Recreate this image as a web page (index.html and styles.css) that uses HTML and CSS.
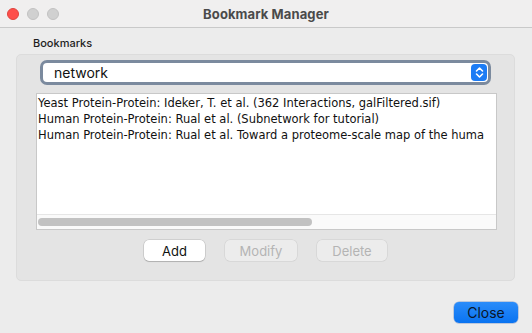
FILE: index.html
```html
<!DOCTYPE html>
<html lang="en">
<head>
    <meta charset="UTF-8">
    <title>Bookmark Manager</title>
    <link rel="stylesheet" href="styles.css">
</head>
<body>
    <div class="window">
        <div class="titlebar">
            <div class="lights">
                <span class="light red"></span>
                <span class="light gray"></span>
                <span class="light gray"></span>
            </div>
            <div class="title">Bookmark Manager</div>
        </div>

        <div class="content">
            <div class="group-label">Bookmarks</div>
            <div class="panel">
                <div class="select">
                    <span class="select-text">network</span>
                    <span class="stepper">
                        <svg width="11" height="13" viewBox="0 0 11 13">
                            <path d="M2.5 5 L5.5 2 L8.5 5 M2.5 8 L5.5 11 L8.5 8" fill="none" stroke="#fff" stroke-width="1.6" stroke-linecap="round" stroke-linejoin="round"/>
                        </svg>
                    </span>
                </div>

                <div class="list">
                    <div class="rows">
                        <div class="row">Yeast Protein-Protein: Ideker, T. et al. (362 Interactions, galFiltered.sif)</div>
                        <div class="row">Human Protein-Protein: Rual et al. (Subnetwork for tutorial)</div>
                        <div class="row">Human Protein-Protein: Rual et al. Toward a proteome-scale map of the huma</div>
                    </div>
                    <div class="hscroll"><div class="thumb"></div></div>
                </div>

                <div class="actions">
                    <button class="btn">Add</button>
                    <button class="btn disabled">Modify</button>
                    <button class="btn disabled">Delete</button>
                </div>
            </div>

            <div class="footer">
                <button class="btn primary">Close</button>
            </div>
        </div>
    </div>
</body>
</html>
```

FILE: styles.css
```css
html, body {
    margin: 0;
    padding: 0;
}
body {
    width: 532px;
    height: 333px;
    overflow: hidden;
    background: #ececec;
    font-family: "Inter", "Open Sans", sans-serif;
    font-size: 13px;
    color: #222;
}
.window {
    height: 333px;
    display: flex;
    flex-direction: column;
}
.titlebar {
    height: 28px;
    flex: none;
    background: #f0efef;
    border-bottom: 1px solid #c9c9c9;
    box-sizing: border-box;
    position: relative;
    display: flex;
    align-items: center;
    justify-content: center;
}
.lights {
    position: absolute;
    left: 7px;
    top: 8px;
    display: flex;
    gap: 8px;
}
.light {
    width: 12px;
    height: 12px;
    border-radius: 50%;
    box-sizing: border-box;
}
.light.red {
    background: #fe4e4a;
    border: 1px solid #e0443e;
}
.light.gray {
    background: #d0d0d0;
    border: 1px solid #c2c2c2;
}
.title {
    font-weight: 700;
    font-size: 13px;
    color: #4a4a4a;
    letter-spacing: 0.1px;
    padding-top: 1px;
}
.content {
    flex: 1;
    padding: 9px 16px 0 16px;
    display: flex;
    flex-direction: column;
}
.group-label {
    font-size: 11px;
    font-weight: 500;
    color: #1e1e1e;
    padding-left: 17px;
    height: 17px;
    line-height: 13px;
}
.panel {
    width: 499px;
    height: 227px;
    box-sizing: border-box;
    background: #e4e4e4;
    border: 1px solid #dcdcdc;
    border-radius: 5px;
    padding: 5px 0 0 19px;
}
.select {
    width: 451px;
    height: 25px;
    box-sizing: border-box;
    margin-left: 4px;
    background: #fff;
    border: 3px solid #7b8a9e;
    border-radius: 7px;
    display: flex;
    align-items: center;
    justify-content: space-between;
    padding: 0 0 0 11px;
}
.select-text {
    font-size: 14px;
    color: #111;
}
.stepper {
    width: 16px;
    height: 17px;
    background: #1c7cf5;
    border-radius: 4px;
    display: flex;
    align-items: center;
    justify-content: center;
    margin-right: 1px;
}
.list {
    margin-top: 8px;
    width: 461px;
    height: 137px;
    box-sizing: border-box;
    border: 1px solid #c8c8c8;
    background: #fff;
    display: flex;
    flex-direction: column;
    overflow: hidden;
}
.rows {
    flex: 1;
    padding-top: 1px;
}
.row {
    font-family: "DejaVu Sans", sans-serif;
    font-size: 11.5px;
    line-height: 16px;
    color: #111;
    white-space: nowrap;
    padding-left: 1px;
}
.hscroll {
    height: 14px;
    flex: none;
    background: #fafafa;
    border-top: 1px solid #e6e6e6;
    display: flex;
    align-items: center;
    padding-left: 1px;
}
.thumb {
    width: 274px;
    height: 8px;
    border-radius: 4px;
    background: #c2c2c2;
}
.actions {
    display: flex;
    gap: 20px;
    margin-top: 10px;
    padding-left: 108px;
}
.btn {
    font-family: "Inter", "Open Sans", sans-serif;
    font-size: 13px;
    height: 21px;
    border-radius: 5px;
    border: none;
    background: #fff;
    color: #111;
    box-shadow: 0 0 0 0.5px rgba(0, 0, 0, 0.18), 0 1px 1px rgba(0, 0, 0, 0.15);
    padding: 0;
}
.actions .btn {
    width: 61px;
}
.actions .btn.disabled {
    width: 72px;
    background: #ececec;
    color: #b4b4b4;
    box-shadow: 0 0 0 0.5px rgba(0, 0, 0, 0.1);
}
.actions .btn.disabled:last-child {
    width: 70px;
}
.footer {
    display: flex;
    justify-content: flex-end;
    margin-top: 21px;
    margin-right: -2px;
}
.btn.primary {
    width: 64px;
    background: linear-gradient(#2a8cfa, #0a73f0);
    color: #0a1628;
    font-size: 14px;
    box-shadow: 0 0 0 0.5px rgba(0, 60, 160, 0.4);
}
```
